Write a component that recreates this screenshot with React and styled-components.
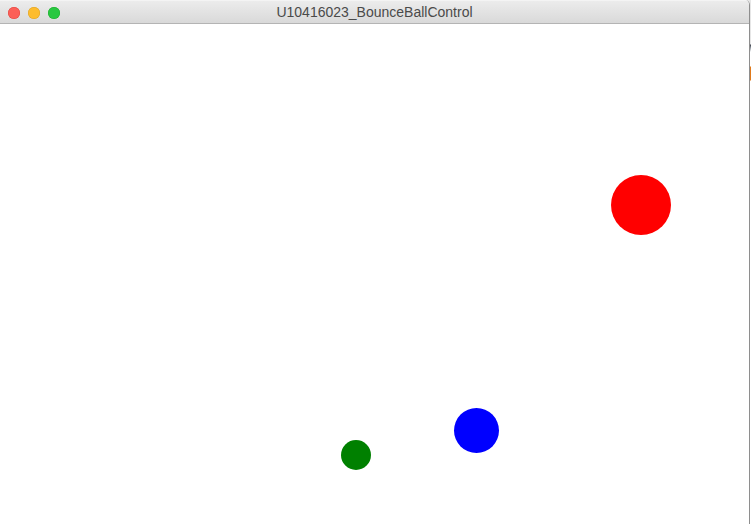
import React from "react";
import styled, { createGlobalStyle } from "styled-components";

const Global = createGlobalStyle`
  html, body { margin: 0; padding: 0; background: #ffffff; overflow: hidden; }
  #root { width: 751px; height: 524px; }
`;

const Desktop = styled.div`
  width: 751px;
  height: 524px;
  display: flex;
  background: linear-gradient(
    to bottom,
    #e6e6e6 0px,
    #e6e6e6 44px,
    #3a3f4a 45px,
    #9aa0a8 48px,
    #ffffff 52px,
    #ffffff 66px,
    #e07a1c 67px,
    #e07a1c 80px,
    #ffffff 81px
  );
`;

const Window = styled.div`
  width: 749px;
  height: 524px;
  border-right: 1px solid #8e8e8e;
  border-top-right-radius: 5px;
  display: flex;
  flex-direction: column;
  background: #ffffff;
  overflow: hidden;
`;

const TitleBar = styled.div`
  flex: none;
  position: relative;
  display: flex;
  align-items: center;
  justify-content: center;
  background: linear-gradient(to bottom, #ececec 0%, #d9d9d9 100%);
  border-top: 1px solid #f4f4f4;
  border-bottom: 1px solid #b4b4b4;
  box-sizing: border-box;
  height: 24px;
`;

const Lights = styled.div`
  position: absolute;
  left: 8px;
  top: 6px;
  display: flex;
  gap: 8px;
`;

const Light = styled.span`
  width: 12px;
  height: 12px;
  border-radius: 50%;
  background: ${(p) => p.$color};
  box-shadow: inset 0 0 0 0.5px ${(p) => p.$edge};
`;

const Title = styled.div`
  font-family: "Liberation Sans", Arial, sans-serif;
  font-size: 14px;
  color: #4a4a4a;
  padding-left: 0px;
`;

const Canvas = styled.div`
  position: relative;
  flex: 1;
  background: #ffffff;
`;

const Ball = styled.div`
  position: absolute;
  border-radius: 50%;
  background: ${(p) => p.$color};
`;

const balls = [
  { color: "#ff0000", cx: 641, cy: 205, d: 60 },
  { color: "#0000ff", cx: 476, cy: 430, d: 45 },
  { color: "#008000", cx: 356, cy: 455, d: 30 },
];

export default function App() {
  return (
    <>
      <Global />
      <Desktop>
        <Window>
          <TitleBar>
            <Lights>
              <Light $color="#fc5f57" $edge="#e0443e" />
              <Light $color="#fdbc2e" $edge="#dea123" />
              <Light $color="#28c840" $edge="#1aab29" />
            </Lights>
            <Title>U10416023_BounceBallControl</Title>
          </TitleBar>
          <Canvas>
            {balls.map((b, i) => (
              <Ball
                key={i}
                $color={b.color}
                style={{
                  left: b.cx - b.d / 2,
                  top: b.cy - 24 - b.d / 2,
                  width: b.d,
                  height: b.d,
                }}
              />
            ))}
          </Canvas>
        </Window>
      </Desktop>
    </>
  );
}
